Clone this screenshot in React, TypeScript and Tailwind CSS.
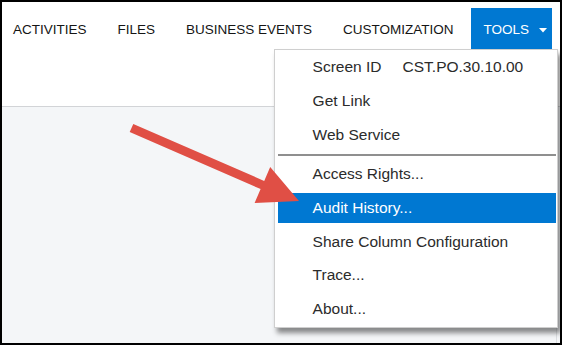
import React from "react";

const navItems = ["ACTIVITIES", "FILES", "BUSINESS EVENTS", "CUSTOMIZATION"];

const menuTop = ["Get Link", "Web Service"];
const menuBottom = [
  { label: "Access Rights...", active: false },
  { label: "Audit History...", active: true },
  { label: "Share Column Configuration", active: false },
  { label: "Trace...", active: false },
  { label: "About...", active: false },
];

const MenuItem = ({ children, active }: { children: React.ReactNode; active?: boolean }) => (
  <div
    className={`h-[30px] flex items-center pl-[35px] pb-[1px] text-[15.5px] ${
      active ? "bg-[#0078d2] text-white" : "text-[#2b2b2b]"
    }`}
  >
    {children}
  </div>
);

const ToolsMenu = () => (
  <div className="absolute top-full right-[-6px] w-[284px] bg-white border border-[#cfcfcf] shadow-[3px_5px_5px_rgba(0,0,0,0.45)] pl-[3px] pr-[1px] pt-[2.5px] pb-[2.5px] flex flex-col gap-[3.7px] z-10">
    <MenuItem>
      <span className="w-[90px]">Screen ID</span>
      <span>CST.PO.30.10.00</span>
    </MenuItem>
    {menuTop.map((m) => (
      <MenuItem key={m}>{m}</MenuItem>
    ))}
    <div className="h-[2px] bg-[#8f8f8f]" />
    {menuBottom.map((m) => (
      <MenuItem key={m.label} active={m.active}>
        {m.label}
      </MenuItem>
    ))}
  </div>
);

export default function App() {
  return (
    <div
      className="relative w-[562px] h-[345px] border-2 border-black bg-white flex flex-col overflow-hidden"
      style={{ fontFamily: '"Liberation Sans", Arial, sans-serif' }}
    >
      <div className="h-[105px] border-b border-[#d2d4d7] bg-white">
        <nav className="flex items-center mt-[6px] h-[41px] pl-[11px] text-[13.5px] text-[#151515]">
          <div className="flex items-center gap-[31px] pt-[3px]">
            {navItems.map((n) => (
              <span key={n}>{n}</span>
            ))}
          </div>
          <div className="relative ml-[17px]">
            <button className="h-[41px] w-[81px] bg-[#0078d2] text-white flex items-center pl-[13px] pt-[3px]">
              <span>TOOLS</span>
              <svg className="ml-[10px]" width="8" height="5" viewBox="0 0 8 5">
                <path d="M0 0 L8 0 L4 4.5 Z" fill="white" />
              </svg>
            </button>
            <ToolsMenu />
          </div>
        </nav>
      </div>
      <div className="flex-1 flex bg-[#f4f6f8]">
        <div className="flex-1" />
        <div className="w-px bg-[#dcdfe2]" />
        <div className="w-[3px]" />
      </div>
      <svg
        className="absolute -left-[2px] -top-[2px] pointer-events-none z-20"
        width="562"
        height="345"
        viewBox="0 0 562 345"
      >
        <polygon
          points="133.3,123.9 264.2,180.9 270.2,167.1 299,201 254.6,202.9 260.6,189.1 129.7,132.1"
          fill="#e04f45"
        />
      </svg>
    </div>
  );
}
